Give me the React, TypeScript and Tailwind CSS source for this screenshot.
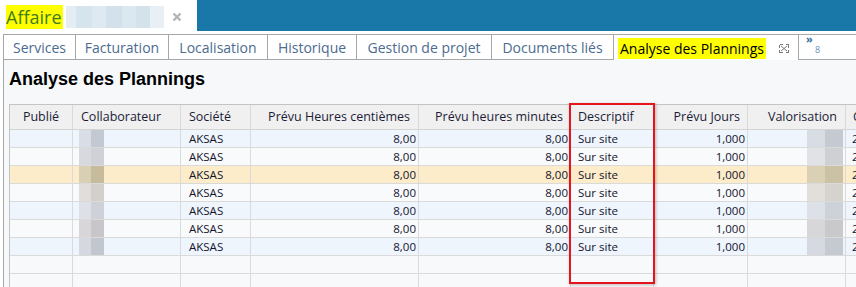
import React from "react";

const cols = [63, 108, 70, 168, 152, 83, 94, 98, 90];
const gridCols = "grid grid-cols-[63px_108px_70px_168px_152px_83px_94px_98px_90px]";

type Row = { bg: string; blurA: string; blurB: string; valA: string; valB: string };

const rows: Row[] = [
  { bg: "bg-[#eef5fd]", blurA: "bg-[#d9dde5]", blurB: "bg-[#c3c8d3]", valA: "bg-[#d8dce3]", valB: "bg-[#c4c9d2]" },
  { bg: "bg-[#f9fafb]", blurA: "bg-[#d8d9de]", blurB: "bg-[#d0d1d6]", valA: "bg-[#e1e2e5]", valB: "bg-[#cfd0d3]" },
  { bg: "bg-[#fcecc9]", blurA: "bg-[#d9cfb4]", blurB: "bg-[#c6bb9c]", valA: "bg-[#d9d0b6]", valB: "bg-[#cbc1a4]" },
  { bg: "bg-[#f9fafb]", blurA: "bg-[#e0ddda]", blurB: "bg-[#d3d0cc]", valA: "bg-[#e2dfdb]", valB: "bg-[#d6d3cf]" },
  { bg: "bg-[#eef5fd]", blurA: "bg-[#dde0e6]", blurB: "bg-[#ced1d8]", valA: "bg-[#dde1e7]", valB: "bg-[#cdd1d8]" },
  { bg: "bg-[#f9fafb]", blurA: "bg-[#d8d6d8]", blurB: "bg-[#c8c6ca]", valA: "bg-[#d7d7da]", valB: "bg-[#c9c9cc]" },
  { bg: "bg-[#eef5fd]", blurA: "bg-[#d5d8df]", blurB: "bg-[#c2c6cf]", valA: "bg-[#d6dae0]", valB: "bg-[#c5c9d0]" },
];

const seg = "'Open Sans', 'Noto Sans', sans-serif";

function CloseBoxIcon() {
  return (
    <svg width="12" height="11" viewBox="0 0 12 11" className="block">
      <g stroke="#7a7a7a" strokeWidth="1" fill="none" shapeRendering="crispEdges">
        <path d="M1.5 1.5 H4.5 M1.5 1.5 V4.5" />
        <path d="M10.5 1.5 H7.5 M10.5 1.5 V4.5" />
        <path d="M1.5 9.5 H4.5 M1.5 9.5 V6.5" />
        <path d="M10.5 9.5 H7.5 M10.5 9.5 V6.5" />
      </g>
      <g stroke="#7a7a7a" strokeWidth="1" fill="none">
        <path d="M3 3 L9 8 M9 3 L3 8" />
      </g>
    </svg>
  );
}

function Tab({ label, w }: { label: string; w: string }) {
  return (
    <div className={`${w} h-full shrink-0 border-r border-b border-[#a7a7a7] bg-white flex items-center justify-center text-[14px] text-[#4b6b8f]`}>
      {label}
    </div>
  );
}

export default function App() {
  return (
    <div className="w-[856px] h-[287px] overflow-hidden bg-white" style={{ fontFamily: seg }}>
      {/* top bar */}
      <div className="flex h-[31px]">
        <div className="w-[197px] bg-white flex items-center pl-[6px] pt-[2px]">
          <span className="bg-[#ffff00] text-[#3e7d1d] text-[18px] leading-[24px] pr-[1px]">Affaire</span>
          <div className="ml-[3px] w-[98px] h-[22px] flex">
            <div className="w-[10px] bg-[#e3edf3]" />
            <div className="w-[16px] bg-[#d6e4ee]" />
            <div className="w-[14px] bg-[#dfe9f1]" />
            <div className="w-[16px] bg-[#d2e1eb]" />
            <div className="w-[14px] bg-[#dce8f0]" />
            <div className="w-[14px] bg-[#d4e2ec]" />
            <div className="w-[14px] bg-[#e8f0f5]" />
          </div>
          <svg width="10" height="10" viewBox="0 0 10 10" className="ml-[8px]">
            <path d="M1.5 1.5 L8.5 8.5 M8.5 1.5 L1.5 8.5" stroke="#b4b4b4" strokeWidth="2.4" />
          </svg>
        </div>
        <div className="flex-1 bg-[#1a78a8]" />
      </div>
      <div className="h-[3px] bg-white" />

      {/* tabs */}
      <div className="pl-[3px] h-[26px]">
        <div className="flex h-full border-t border-l border-[#a7a7a7]">
          <Tab label="Services" w="w-[72px]" />
          <Tab label="Facturation" w="w-[93px]" />
          <Tab label="Localisation" w="w-[99px]" />
          <Tab label="Historique" w="w-[89px]" />
          <Tab label="Gestion de projet" w="w-[135px]" />
          <Tab label="Documents liés" w="w-[122px]" />
          <div className="w-[185px] h-full shrink-0 border-r border-[#a7a7a7] bg-white flex items-center pl-[4px]">
            <span className="bg-[#ffff00] text-black text-[14px] leading-[21px] h-[21px] px-[2px] mt-[1px]">Analyse des Plannings</span>
            <span className="ml-[12px] mt-[2px]"><CloseBoxIcon /></span>
          </div>
          <div className="flex-1 h-full border-b border-[#a7a7a7] bg-white relative">
            <span className="absolute left-[7px] top-[-3px] text-[11px] text-[#3b6ea5] font-bold leading-[14px]">»</span>
            <span className="absolute left-[16px] top-[9px] text-[9px] text-[#6d8fbb] leading-[12px]">8</span>
          </div>
        </div>
      </div>

      {/* content */}
      <div className="ml-[3px] border-l border-[#a7a7a7] bg-[#f7f8fa] h-[227px] pl-[5px] pt-[8px]">
        <div className="text-[18px] leading-[22px] font-bold text-black" style={{ fontFamily: "'Liberation Sans', Arial, sans-serif" }}>
          Analyse des Plannings
        </div>
        <div className="relative mt-[14px] border-t border-l border-[#c4c4c4] h-[200px]">
          {/* header */}
          <div className={`${gridCols} h-[25px] bg-[#f0f0f0] border-b border-[#d4d4d4] text-[12.5px] text-[#1c1c38]`}>
            <div className="border-r border-[#d9d9d9] flex items-center justify-center">Publié</div>
            <div className="border-r border-[#d9d9d9] flex items-center pl-[8px]">Collaborateur</div>
            <div className="border-r border-[#d9d9d9] flex items-center pl-[8px]">Société</div>
            <div className="border-r border-[#d9d9d9] flex items-center justify-end pr-[8px] whitespace-nowrap">Prévu Heures centièmes</div>
            <div className="border-r border-[#d9d9d9] flex items-center justify-end pr-[7px] whitespace-nowrap">Prévu heures minutes</div>
            <div className="border-r border-[#d9d9d9] flex items-center pl-[7px]">Descriptif</div>
            <div className="border-r border-[#d9d9d9] flex items-center justify-end pr-[7px]">Prévu Jours</div>
            <div className="border-r border-[#d9d9d9] flex items-center justify-end pr-[8px]">Valorisation</div>
            <div className="flex items-center pl-[7px] whitespace-nowrap overflow-hidden">Commentaire</div>
          </div>
          {/* data rows */}
          {rows.map((r, i) => (
            <div key={i} className={`${gridCols} h-[18px] ${r.bg} border-b border-[#dadada] text-[11.5px] text-[#14142e]`}>
              <div className="border-r border-[#dadada]" />
              <div className="border-r border-[#dadada] flex pl-[6px]">
                <div className={`w-[12px] h-full ${r.blurA}`} />
                <div className={`w-[13px] h-full ${r.blurB}`} />
              </div>
              <div className="border-r border-[#dadada] flex items-center pl-[8px]">AKSAS</div>
              <div className="border-r border-[#dadada] flex items-center justify-end pr-[2px]">8,00</div>
              <div className="border-r border-[#dadada] flex items-center justify-end pr-[2px]">8,00</div>
              <div className="border-r border-[#dadada] flex items-center pl-[7px]">Sur site</div>
              <div className="border-r border-[#dadada] flex items-center justify-end pr-[2px]">1,000</div>
              <div className="border-r border-[#dadada] flex pl-[59px]">
                <div className={`w-[18px] h-full ${r.valA}`} />
                <div className={`w-[18px] h-full ${r.valB}`} />
              </div>
              <div className="flex items-center pl-[6px] whitespace-nowrap overflow-hidden">25/03/2019</div>
            </div>
          ))}
          {/* empty rows */}
          {[0, 1].map((i) => (
            <div key={"e" + i} className={`${gridCols} h-[18px] bg-[#f8f9fa] border-b border-[#dadada]`}>
              {cols.map((_, j) => (
                <div key={j} className={j < cols.length - 1 ? "border-r border-[#dadada]" : ""} />
              ))}
            </div>
          ))}
          {/* red highlight box */}
          <div className="absolute left-[559px] top-[-2px] w-[86px] h-[181px] border-2 border-[#e6141c] shadow-[1px_1px_3px_rgba(0,0,0,0.25)] pointer-events-none" />
        </div>
      </div>
    </div>
  );
}
